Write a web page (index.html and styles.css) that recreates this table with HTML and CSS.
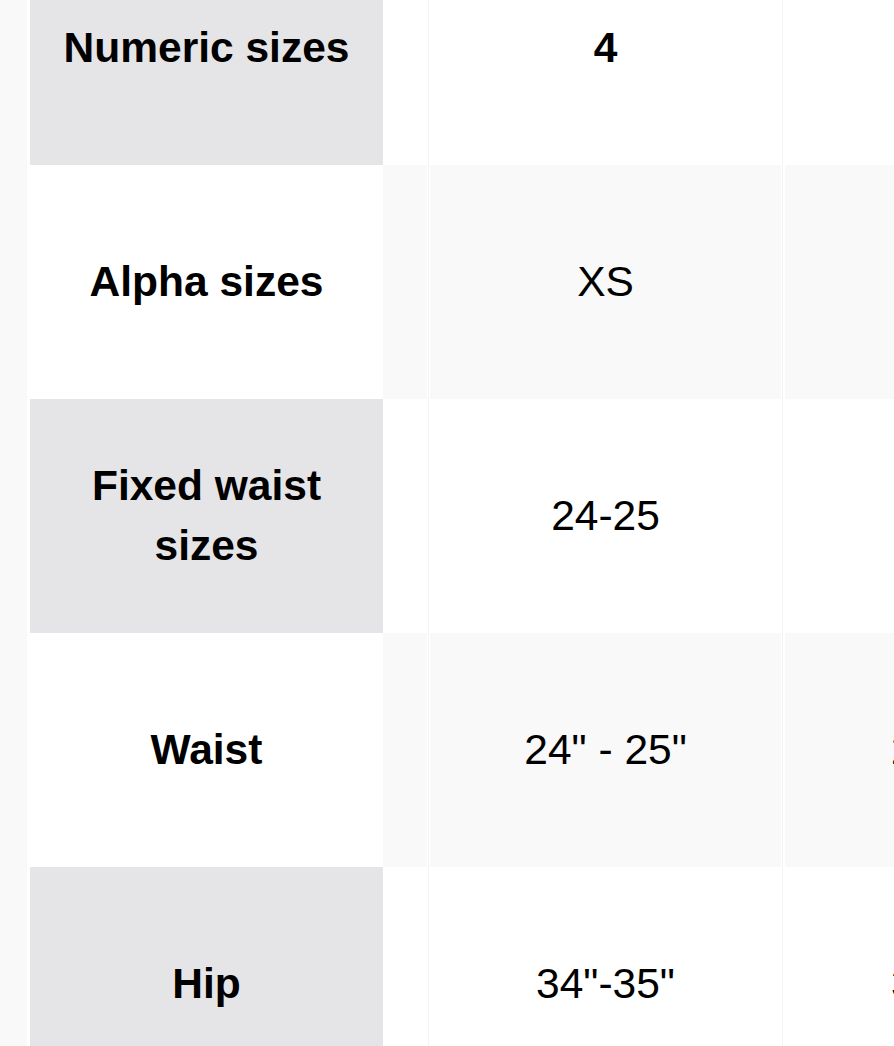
FILE: index.html
```html
<!DOCTYPE html>
<html lang="en">
<head>
<meta charset="utf-8">
<title>Size chart</title>
<link rel="stylesheet" href="styles.css">
</head>
<body>
<div class="chart">
  <div class="row row-shaded">
    <div class="gutter"></div><div class="edge"></div>
    <div class="label">Numeric sizes</div>
    <div class="cell peek"></div><div class="sep sep-narrow"></div>
    <div class="cell strong">4</div><div class="sep"></div>
    <div class="cell strong"></div>
  </div>
  <div class="row row-plain">
    <div class="gutter"></div><div class="edge"></div>
    <div class="label">Alpha sizes</div>
    <div class="cell peek"></div><div class="sep sep-narrow"></div>
    <div class="cell">XS</div><div class="sep"></div>
    <div class="cell"></div>
  </div>
  <div class="row row-shaded">
    <div class="gutter"></div><div class="edge"></div>
    <div class="label">Fixed waist sizes</div>
    <div class="cell peek"></div><div class="sep sep-narrow"></div>
    <div class="cell">24-25</div><div class="sep"></div>
    <div class="cell"></div>
  </div>
  <div class="row row-plain">
    <div class="gutter"></div><div class="edge"></div>
    <div class="label">Waist</div>
    <div class="cell peek"></div><div class="sep sep-narrow"></div>
    <div class="cell">24" - 25"</div><div class="sep"></div>
    <div class="cell">26"-27"</div>
  </div>
  <div class="row row-shaded">
    <div class="gutter"></div><div class="edge"></div>
    <div class="label">Hip</div>
    <div class="cell peek"></div><div class="sep sep-narrow"></div>
    <div class="cell">34"-35"</div><div class="sep"></div>
    <div class="cell">36"-37"</div>
  </div>
</div>
</body>
</html>
```
FILE: styles.css
```css
html, body {
  margin: 0;
  padding: 0;
  background: #ffffff;
  overflow: hidden;
}

body {
  font-family: "Liberation Sans", Arial, sans-serif;
  color: #000000;
}

.chart {
  margin-top: -69px;
  width: 1200px;
}

.row {
  display: grid;
  grid-template-columns: 27px 3px 353px 44px 3px 351px 4px 351px;
  height: 234px;
}

.gutter {
  background: #f9f9f9;
}

.edge {
  background: #ffffff;
}

.label {
  display: flex;
  align-items: center;
  justify-content: center;
  text-align: center;
  padding: 0 24px;
  font-size: 42.5px;
  font-weight: 700;
  line-height: 60px;
}

.cell {
  display: flex;
  align-items: center;
  justify-content: center;
  text-align: center;
  font-size: 42.5px;
  font-weight: 400;
  line-height: 60px;
  white-space: nowrap;
}

.cell.strong {
  font-weight: 700;
}

.sep {
  background: linear-gradient(to right, #ffffff 1px, #f4f4f4 1px, #f4f4f4 2px, #ffffff 2px);
}

.row-shaded .label {
  background: #e5e5e7;
}

.row-shaded .cell {
  background: #ffffff;
}

.row-plain .label {
  background: #ffffff;
}

.row-plain .cell {
  background: #f9f9f9;
}
```
